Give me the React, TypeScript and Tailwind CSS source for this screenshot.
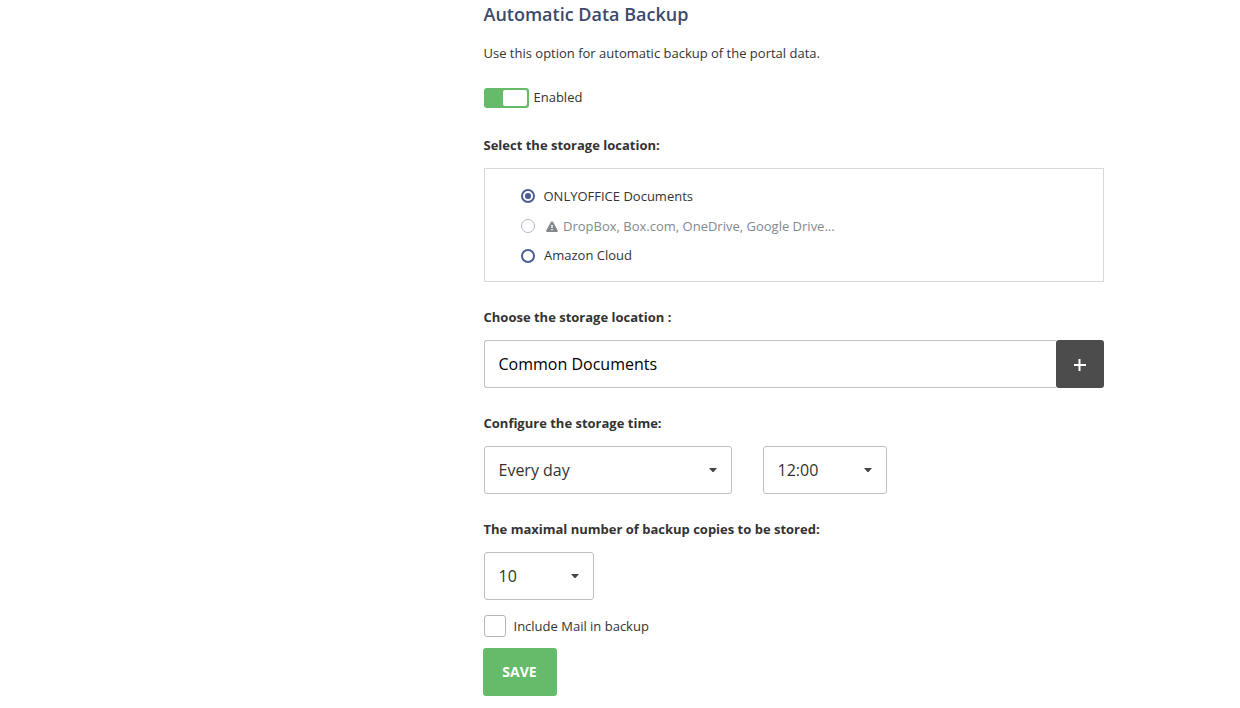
import React, { useState } from "react";

function Caret() {
  return (
    <svg width="8" height="4" viewBox="0 0 8 4" className="shrink-0">
      <path d="M0 0h8L4.5 4h-1z" fill="#444444" />
    </svg>
  );
}

function SelectBox({ value, size }: { value: string; size: string }) {
  return (
    <button
      type="button"
      className={`flex h-12 items-center justify-between rounded-[3px] border border-[#bfbfbf] bg-white pr-[14px] pl-[14px] text-base text-[#333333] ${size}`}
    >
      <span>{value}</span>
      <Caret />
    </button>
  );
}

function Radio({ checked, disabled }: { checked?: boolean; disabled?: boolean }) {
  return (
    <svg width="14" height="14" viewBox="0 0 14 14" className="shrink-0">
      <circle
        cx="7"
        cy="7"
        r={disabled ? 6.5 : 6}
        fill="#ffffff"
        stroke={disabled ? "#b0b8cf" : "#4c5f93"}
        strokeWidth={disabled ? 1 : 2}
      />
      {checked && <circle cx="7" cy="7" r="3.1" fill="#4c5f93" />}
    </svg>
  );
}

function Warning() {
  return (
    <svg width="12" height="11" viewBox="0 0 12 11" className="mr-[5px] ml-[2px] shrink-0">
      <path d="M6 0.3c.4 0 .7.2.9.5l4.9 8.7c.4.7 0 1.4-.8 1.4H1c-.8 0-1.2-.7-.8-1.4L5.1.8c.2-.3.5-.5.9-.5z" fill="#83888d" />
      <path d="M5.3 4h1.4v3H5.3zM5.3 8h1.4v1.3H5.3z" fill="#ffffff" />
    </svg>
  );
}

function Label({ children }: { children: React.ReactNode }) {
  return <div className="h-5 text-[13px] leading-5 font-bold">{children}</div>;
}

export default function App() {
  const [enabled, setEnabled] = useState(true);
  const [mail, setMail] = useState(false);
  return (
    <main className="h-[708px] overflow-hidden bg-white pl-[483.5px] font-['Open_Sans',sans-serif] text-[13px] leading-5 whitespace-nowrap text-[#333333]">
      <div className="flex w-[620px] flex-col">
        <h1 className="h-7 text-lg leading-7 font-semibold text-[#3d4a6b]">Automatic Data Backup</h1>
        <p className="mt-[15px]">Use this option for automatic backup of the portal data.</p>
        <div className="mt-[25px] flex h-5 items-center gap-[5px]">
          <button
            type="button"
            aria-label="Automatic backup"
            onClick={() => setEnabled(!enabled)}
            className={`flex h-5 w-[45px] rounded-[3px] bg-[#65bb69] p-0.5 ${enabled ? "justify-end" : "justify-start"}`}
          >
            <span className="h-4 w-6 rounded-[2px] bg-white" />
          </button>
          <span className="pb-0.5">Enabled</span>
        </div>

        <div className="mt-[27px]">
          <Label>Select the storage location:</Label>
        </div>
        <div className="mt-[13px] flex h-[114px] flex-col border border-[#d9d9d9] pt-[17px] pl-9">
          <div className="flex h-5 items-center">
            <Radio checked />
            <span className="ml-[9px]">ONLYOFFICE Documents</span>
          </div>
          <div className="mt-[10px] flex h-5 items-center text-[#83888d]">
            <Radio disabled />
            <span className="ml-[9.5px] flex items-center">
              <Warning />
              DropBox, Box.com, OneDrive, Google Drive...
            </span>
          </div>
          <div className="mt-[10px] flex h-5 items-center">
            <Radio />
            <span className="ml-[9.5px] pb-0.5">Amazon Cloud</span>
          </div>
        </div>

        <div className="mt-[25px]">
          <Label>Choose the storage location :</Label>
        </div>
        <div className="mt-[13px] flex h-12">
          <div className="flex flex-1 items-center rounded-l-[3px] border border-r-0 border-[#bfbfbf] pl-[14px] text-base text-black">
            Common Documents
          </div>
          <button type="button" aria-label="Choose folder" className="flex w-12 items-center justify-center rounded-[3px] bg-[#4c4c4c]">
            <svg width="12" height="12" viewBox="0 0 12 12" className="mt-0.5">
              <path d="M0 6h12M5.5 0v12" stroke="#ffffff" strokeWidth="2" />
            </svg>
          </button>
        </div>

        <div className="mt-[25px]">
          <Label>Configure the storage time:</Label>
        </div>
        <div className="mt-[13px] flex gap-[31px]">
          <SelectBox value="Every day" size="w-[248px]" />
          <SelectBox value="12:00" size="w-[124px]" />
        </div>

        <div className="mt-[25px]">
          <Label>The maximal number of backup copies to be stored:</Label>
        </div>
        <div className="mt-[13px] flex">
          <SelectBox value="10" size="w-[110px]" />
        </div>

        <label className="mt-[15px] flex h-[22px] items-center gap-2">
          <input
            type="checkbox"
            checked={mail}
            onChange={() => setMail(!mail)}
            className="size-[22px] appearance-none rounded-[3px] border border-[#b5b5b5] bg-white checked:bg-[#65bb69]"
          />
          <span>Include Mail in backup</span>
        </label>
        <button type="button" className="mt-[11px] -ml-px h-12 w-[74px] rounded-[3px] bg-[#65bb69] text-sm font-bold text-white">
          SAVE
        </button>
      </div>
    </main>
  );
}
